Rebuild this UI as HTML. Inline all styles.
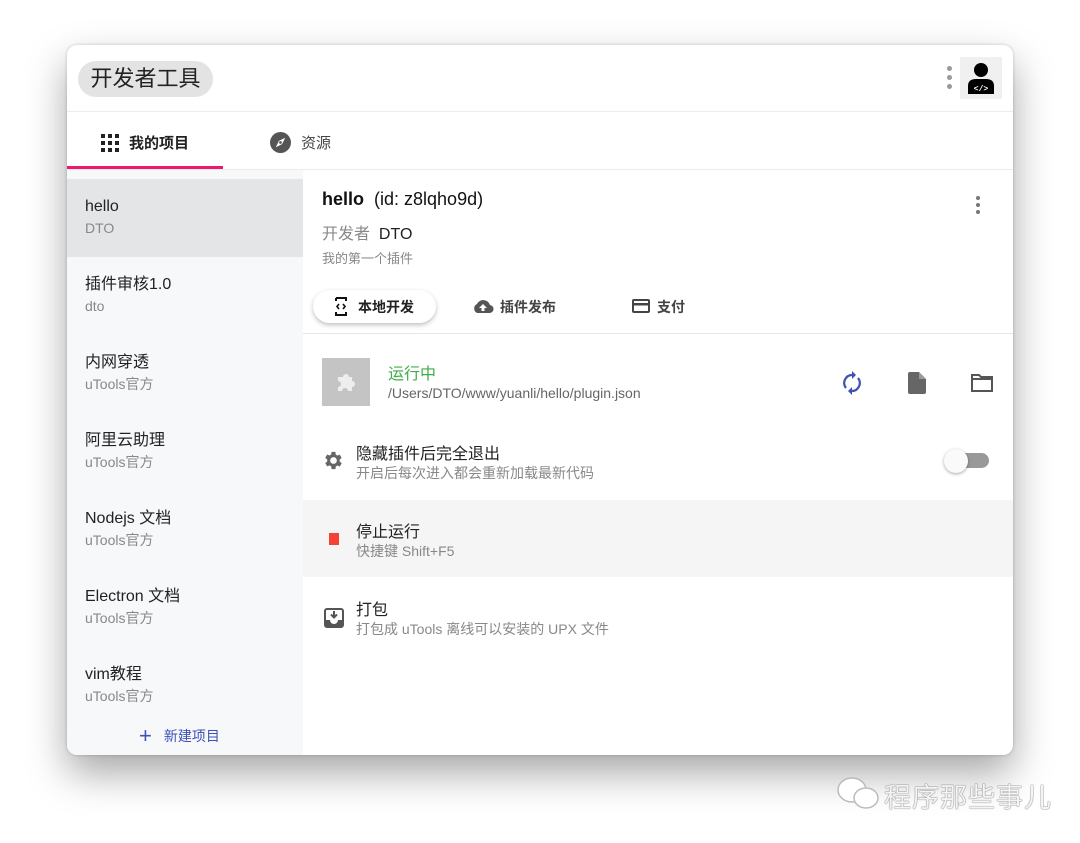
<!DOCTYPE html>
<html><head><meta charset="utf-8"><style>
*{box-sizing:border-box;margin:0;padding:0}
body{width:1080px;height:843px;background:#fff;font-family:"Liberation Sans","Noto Sans CJK SC",sans-serif;position:relative;overflow:hidden;color:#222}
.win{position:absolute;left:67px;top:45px;width:946px;height:710px;background:#fff;border-radius:10px;box-shadow:0 18px 40px rgba(0,0,0,.35),0 0 3px rgba(0,0,0,.2);overflow:hidden}
.a{position:absolute}
.pill{left:11px;top:16px;width:135px;height:36px;border-radius:18px;background:#e3e3e3;font-size:22px;line-height:36px;text-align:center;color:#222}
.hl{left:0;width:946px;height:1px;background:#ececec}
.side{left:0;top:125px;width:236px;height:585px;background:#f7f8fa}
.it{position:absolute;left:0;width:236px;height:78px;padding:18px 0 0 18px}
.it b{display:block;font-weight:normal;font-size:16px;line-height:20px;color:#222}
.it i{display:block;font-style:normal;font-size:14px;line-height:18px;color:#888;margin-top:2px}
.sub{font-size:13px;color:#888}
.t14{font-size:14px}
</style></head><body>
<div class="win">
 <div class="a pill">开发者工具</div>
 <div class="a" style="left:880px;top:21px;"><div style="width:5px;height:5px;border-radius:50%;background:#999;margin-bottom:4px"></div><div style="width:5px;height:5px;border-radius:50%;background:#999;margin-bottom:4px"></div><div style="width:5px;height:5px;border-radius:50%;background:#999"></div></div>
 <div class="a" style="left:893px;top:12px;width:42px;height:42px;background:#f0f0f0">
  <svg width="42" height="42" viewBox="0 0 42 42"><circle cx="21" cy="13" r="7" fill="#000"/><path d="M8 37 V29 Q8 22 16 22 H26 Q34 22 34 29 V37Z" fill="#000"/><text x="21" y="34" font-size="8" fill="#fff" text-anchor="middle" font-family="Liberation Mono" font-weight="bold">&lt;/&gt;</text></svg>
 </div>
 <div class="a hl" style="top:66px"></div>
 <div class="a" style="left:34px;top:89px;width:18px;height:18px">
  <svg width="18" height="18" viewBox="0 0 18 18" fill="#222"><rect x="0" y="0" width="4" height="4"/><rect x="7" y="0" width="4" height="4"/><rect x="14" y="0" width="4" height="4"/><rect x="0" y="7" width="4" height="4"/><rect x="7" y="7" width="4" height="4"/><rect x="14" y="7" width="4" height="4"/><rect x="0" y="14" width="4" height="4"/><rect x="7" y="14" width="4" height="4"/><rect x="14" y="14" width="4" height="4"/></svg></div>
 <div class="a" style="left:62px;top:87px;font-size:15px;font-weight:bold;color:#222">我的项目</div>
 <div class="a" style="left:0;top:121px;width:156px;height:3px;background:#f0186a"></div>
 <svg class="a" style="left:203px;top:87px" width="21" height="21" viewBox="0 0 20 20"><circle cx="10" cy="10" r="10" fill="#555"/><path d="M14.5 5.5 L11.5 11.5 L5.5 14.5 L8.5 8.5Z" fill="#fff"/><circle cx="10" cy="10" r="1.3" fill="#555"/></svg>
 <div class="a" style="left:234px;top:87px;font-size:15px;color:#444">资源</div>
 <div class="a hl" style="top:124px"></div>
 <div class="a side">
  <div class="it" style="top:9px;background:#e4e5e7"><b>hello</b><i>DTO</i></div>
  <div class="it" style="top:87px"><b>插件审核1.0</b><i>dto</i></div>
  <div class="it" style="top:165px"><b>内网穿透</b><i>uTools官方</i></div>
  <div class="it" style="top:243px"><b>阿里云助理</b><i>uTools官方</i></div>
  <div class="it" style="top:321px"><b>Nodejs 文档</b><i>uTools官方</i></div>
  <div class="it" style="top:399px"><b>Electron 文档</b><i>uTools官方</i></div>
  <div class="it" style="top:477px"><b>vim教程</b><i>uTools官方</i></div>
  <div class="a" style="left:72px;top:555px;color:#3f51b5;font-size:14px;line-height:22px"><span style="font-size:22px;vertical-align:-2px;margin-right:12px">+</span>新建项目</div>
 </div>
 <div class="a" style="left:255px;top:144px;font-size:18px;color:#111"><b>hello</b>&nbsp;&nbsp;(id: z8lqho9d)</div>
 <div class="a" style="left:909px;top:151px"><div style="width:4px;height:4px;border-radius:50%;background:#777;margin-bottom:3px"></div><div style="width:4px;height:4px;border-radius:50%;background:#777;margin-bottom:3px"></div><div style="width:4px;height:4px;border-radius:50%;background:#777"></div></div>
 <div class="a" style="left:255px;top:175px;font-size:16px;color:#888">开发者&nbsp;&nbsp;<span style="color:#222">DTO</span></div>
 <div class="a sub" style="left:255px;top:203px">我的第一个插件</div>
 <div class="a" style="left:246px;top:245px;width:123px;height:33px;border-radius:17px;background:#fff;box-shadow:0 2px 5px rgba(0,0,0,.25)"></div>
 <svg class="a" style="left:267px;top:252px" width="14" height="19" viewBox="0 0 14 19"><path d="M2 1h10v3M2 1v3M2 15v3h10v-3" stroke="#111" stroke-width="2" fill="none"/><path d="M5 7 L3 9.5 L5 12 M9 7 L11 9.5 L9 12" stroke="#111" stroke-width="1.6" fill="none"/></svg>
 <div class="a" style="left:291px;top:252px;font-size:14px;font-weight:bold">本地开发</div>
 <svg class="a" style="left:405px;top:253px" width="22" height="16" viewBox="0 0 22 16"><path d="M5 15 A5 5 0 0 1 5 6 A7 7 0 0 1 18 7 A4 4 0 0 1 17 15Z" fill="#555"/><path d="M11 6 L7 10 H9.5 V13 H12.5 V10 H15Z" fill="#fff"/></svg>
 <div class="a" style="left:433px;top:252px;font-size:14px;color:#444;font-weight:bold">插件发布</div>
 <svg class="a" style="left:565px;top:254px" width="18" height="14" viewBox="0 0 18 14"><rect x="1" y="1" width="16" height="12" rx="1" stroke="#444" stroke-width="2" fill="none"/><rect x="1" y="4" width="16" height="2.5" fill="#444"/></svg>
 <div class="a" style="left:590px;top:252px;font-size:14px;color:#444;font-weight:bold">支付</div>
 <div class="a" style="left:236px;top:288px;width:710px;height:1px;background:#e6e6e6"></div>
 <div class="a" style="left:255px;top:313px;width:48px;height:48px;background:#c4c4c4"></div>
 <svg class="a" style="left:268px;top:326px" width="22" height="22" viewBox="0 0 22 22"><path d="M3 6 H8 A3 3 0 0 1 14 6 H17 V10 A3 3 0 0 1 17 16 V20 H13 A3 3 0 0 0 7 20 H3 V16 A3 3 0 0 0 3 10Z" fill="#eee"/></svg>
 <div class="a" style="left:321px;top:315px;font-size:16px;color:#3fae46">运行中</div>
 <div class="a t14" style="left:321px;top:340px;color:#666">/Users/DTO/www/yuanli/hello/plugin.json</div>
 <svg class="a" style="left:775px;top:326px" width="20" height="24" viewBox="0 0 20 24"><path d="M10 4 A8 8 0 0 0 4 17 M10 20 A8 8 0 0 0 16 7" stroke="#3f51b5" stroke-width="2.2" fill="none"/><path d="M10 0 L14 4 L10 8Z M10 24 L6 20 L10 16Z" fill="#3f51b5"/></svg>
 <svg class="a" style="left:841px;top:327px" width="18" height="22" viewBox="0 0 18 22"><path d="M2 0 H11 L18 7 V20 Q18 22 16 22 H2 Q0 22 0 20 V2 Q0 0 2 0Z" fill="#666"/><path d="M11 0 V7 H18" fill="#999"/></svg>
 <svg class="a" style="left:904px;top:329px" width="22" height="18" viewBox="0 0 22 18"><path d="M1 1 H8 L10 3 H21 V17 H1Z M1 5 H21" stroke="#555" stroke-width="2" fill="none"/></svg>
 <svg class="a" style="left:255px;top:404px" width="23" height="23" viewBox="0 0 24 24"><path fill="#666" d="M19.4 13a7.5 7.5 0 0 0 0-2l2.1-1.6-2-3.5-2.5 1a7.4 7.4 0 0 0-1.7-1L15 3h-4l-.4 2.8a7.4 7.4 0 0 0-1.7 1l-2.5-1-2 3.5L6.5 11a7.5 7.5 0 0 0 0 2l-2.1 1.6 2 3.5 2.5-1a7.4 7.4 0 0 0 1.7 1L11 21h4l.4-2.8a7.4 7.4 0 0 0 1.7-1l2.5 1 2-3.5zM13 15.5a3.5 3.5 0 1 1 0-7 3.5 3.5 0 0 1 0 7z" transform="translate(-1 0)"/></svg>
 <div class="a" style="left:289px;top:395px;font-size:16px">隐藏插件后完全退出</div>
 <div class="a sub" style="left:289px;top:418px;font-size:14px">开启后每次进入都会重新加载最新代码</div>
 <div class="a" style="left:880px;top:408px;width:42px;height:15px;border-radius:8px;background:#999"></div>
 <div class="a" style="left:877px;top:404px;width:24px;height:24px;border-radius:50%;background:#fafafa;box-shadow:0 1px 3px rgba(0,0,0,.35)"></div>
 <div class="a" style="left:236px;top:455px;width:710px;height:77px;background:#f5f5f5"></div>
 <div class="a" style="left:262px;top:488px;width:10px;height:12px;background:#f44336"></div>
 <div class="a" style="left:289px;top:473px;font-size:16px">停止运行</div>
 <div class="a sub" style="left:289px;top:496px;font-size:14px">快捷键 Shift+F5</div>
 <svg class="a" style="left:257px;top:563px" width="20" height="20" viewBox="0 0 20 20"><rect x="1" y="1" width="18" height="18" rx="2" stroke="#555" stroke-width="2" fill="none"/><path d="M1 12 H6 A4 4 0 0 0 14 12 H19 V19 H1Z" fill="#555"/><path d="M10 3 V9 M7 6.5 L10 9.5 L13 6.5" stroke="#555" stroke-width="2" fill="none"/></svg>
 <div class="a" style="left:289px;top:551px;font-size:16px">打包</div>
 <div class="a sub" style="left:289px;top:574px;font-size:14px">打包成 uTools 离线可以安装的 UPX 文件</div>
</div>
<svg class="a" style="left:836px;top:776px" width="46" height="36" viewBox="0 0 46 36"><ellipse cx="16" cy="14" rx="14" ry="12" fill="#fff" stroke="#bbb" stroke-width="1.5"/><ellipse cx="30" cy="22" rx="12" ry="10" fill="#fff" stroke="#bbb" stroke-width="1.5"/></svg>
<div class="a" style="left:884px;top:776px;font-size:27px;color:#f4f4f4;text-shadow:0 0 1px #666,0 0 1px #666;letter-spacing:1px">程序那些事儿</div>
</body></html>
